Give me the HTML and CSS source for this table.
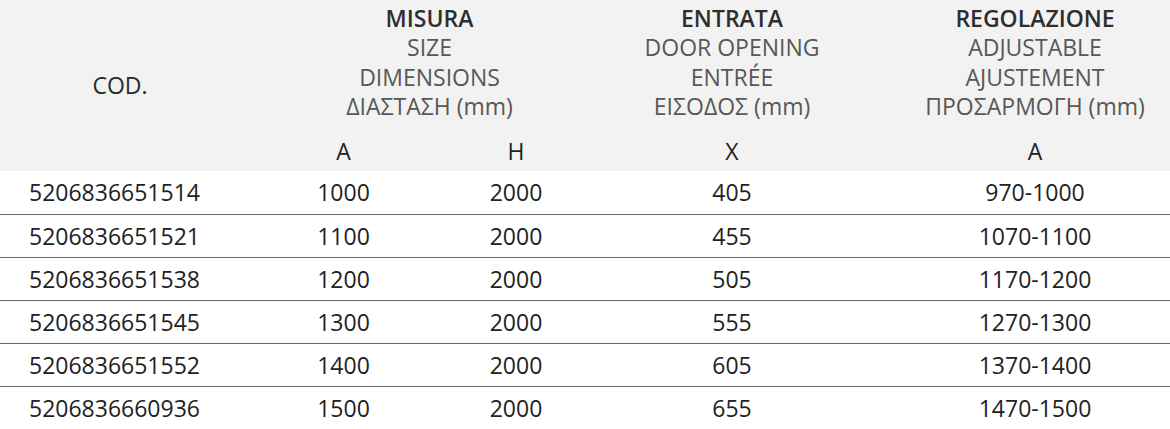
FILE: index.html
```html
<!DOCTYPE html>
<html lang="it">
<head>
<meta charset="utf-8">
<title>Tabella misure</title>
<link rel="stylesheet" href="styles.css">
</head>
<body>
<table class="spec">
  <colgroup>
    <col class="c-cod">
    <col class="c-a">
    <col class="c-h">
    <col class="c-x">
    <col class="c-reg">
  </colgroup>
  <thead>
    <tr class="group">
      <th rowspan="2" class="cod-head">COD.</th>
      <th colspan="2"><span class="t">MISURA</span><span class="s">SIZE</span><span class="s">DIMENSIONS</span><span class="s">ΔΙΑΣΤΑΣΗ (mm)</span></th>
      <th><span class="t">ENTRATA</span><span class="s">DOOR OPENING</span><span class="s">ENTRÉE</span><span class="s">ΕΙΣΟΔΟΣ (mm)</span></th>
      <th><span class="t">REGOLAZIONE</span><span class="s">ADJUSTABLE</span><span class="s">AJUSTEMENT</span><span class="s">ΠΡΟΣΑΡΜΟΓΗ (mm)</span></th>
    </tr>
    <tr class="sub">
      <th>A</th><th>H</th><th>X</th><th>A</th>
    </tr>
  </thead>
  <tbody>
    <tr><td class="code">5206836651514</td><td>1000</td><td>2000</td><td>405</td><td>970-1000</td></tr>
    <tr><td class="code">5206836651521</td><td>1100</td><td>2000</td><td>455</td><td>1070-1100</td></tr>
    <tr><td class="code">5206836651538</td><td>1200</td><td>2000</td><td>505</td><td>1170-1200</td></tr>
    <tr><td class="code">5206836651545</td><td>1300</td><td>2000</td><td>555</td><td>1270-1300</td></tr>
    <tr><td class="code">5206836651552</td><td>1400</td><td>2000</td><td>605</td><td>1370-1400</td></tr>
    <tr><td class="code">5206836660936</td><td>1500</td><td>2000</td><td>655</td><td>1470-1500</td></tr>
  </tbody>
</table>
</body>
</html>
```

FILE: styles.css
```css
html, body {
  margin: 0;
  padding: 0;
  overflow: hidden;
  background: #ffffff;
}

body {
  font-family: "Open Sans", "Noto Sans", sans-serif;
  font-size: 23px;
  color: #222222;
}

.spec {
  border-collapse: collapse;
  table-layout: fixed;
  width: 1208px;
}

.c-cod { width: 257px; }
.c-a { width: 173px; }
.c-h { width: 172px; }
.c-x { width: 260px; }
.c-reg { width: 346px; }

.spec thead {
  background: #f2f2f2;
}

.spec th {
  font-weight: 400;
  text-align: center;
  padding: 0;
}

.group th {
  height: 127px;
  vertical-align: top;
  line-height: 29.4px;
  padding-top: 4px;
}

.group th .t,
.group th .s {
  display: block;
}

.group th .t {
  font-weight: 600;
  color: #2e2e2e;
}

.group th .s {
  color: #585858;
}

.group th.cod-head {
  vertical-align: middle;
  padding-top: 0;
  padding-right: 17px;
  color: #2a2a2a;
}

.sub th {
  height: 40px;
  line-height: 29px;
  vertical-align: middle;
  color: #222222;
}

.spec td {
  height: 42px;
  padding: 0;
  line-height: 29px;
  text-align: center;
  vertical-align: middle;
  color: #222222;
  border-top: 1px solid #6a6a6a;
}

.spec tbody tr:first-child td {
  border-top: none;
  height: 43px;
}

.spec td.code {
  text-align: left;
  padding-left: 29px;
}
```
